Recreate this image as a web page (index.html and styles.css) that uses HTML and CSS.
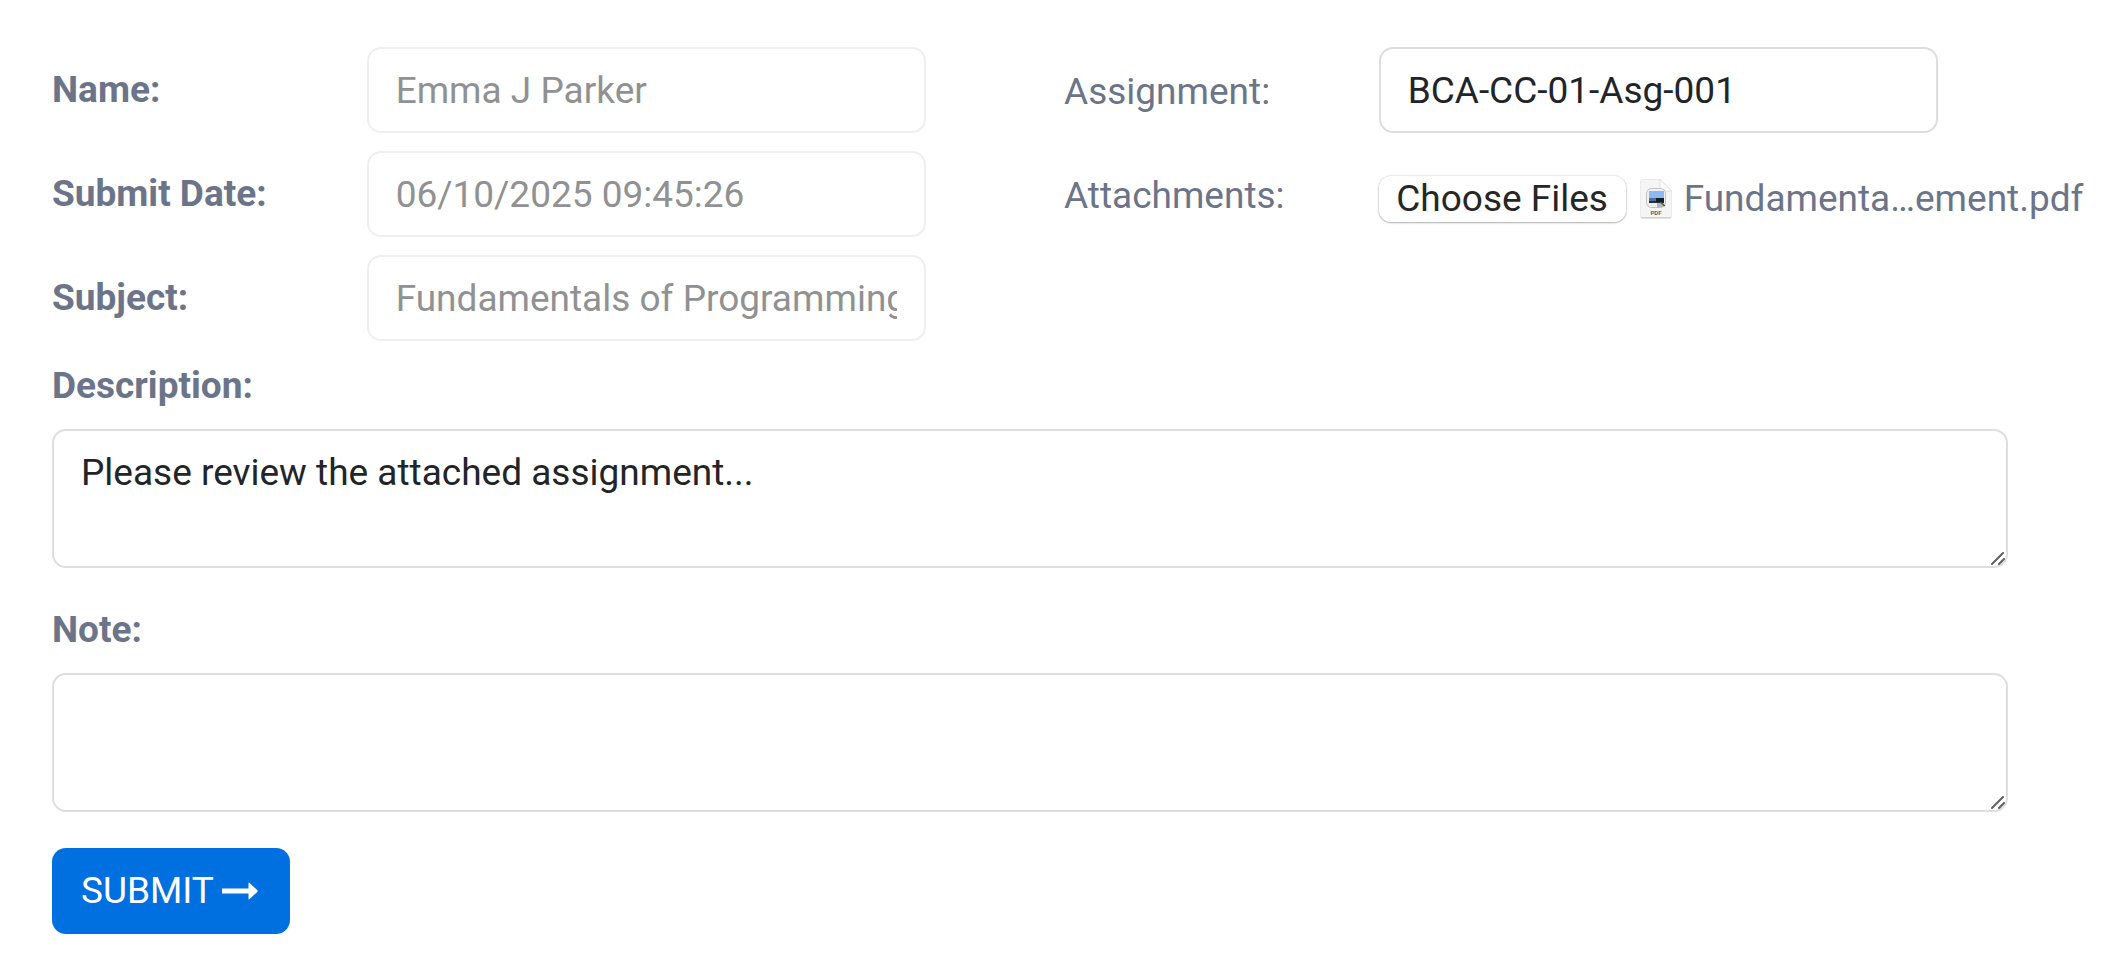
FILE: index.html
```html
<!DOCTYPE html>
<html lang="en">
<head>
  <meta charset="UTF-8">
  <meta name="viewport" content="width=device-width, initial-scale=1.0">
  <title>Submit Assignment</title>
  <link rel="stylesheet" href="styles.css">
</head>
<body>
  <form class="assignment-form">
    <div class="columns">
      <div class="column">
        <div class="field">
          <label for="name">Name:</label>
          <input type="text" id="name" class="form-control" value="Emma J Parker" disabled>
        </div>
        <div class="field">
          <label for="submitDate">Submit Date:</label>
          <input type="text" id="submitDate" class="form-control" value="06/10/2025 09:45:26" disabled>
        </div>
        <div class="field">
          <label for="subject">Subject:</label>
          <input type="text" id="subject" class="form-control" value="Fundamentals of Programming" disabled>
        </div>
      </div>

      <div class="column column-light">
        <div class="field">
          <label for="assignment">Assignment:</label>
          <input type="text" id="assignment" class="form-control" value="BCA-CC-01-Asg-001">
        </div>
        <div class="field">
          <label for="attachments">Attachments:</label>
          <div class="file-row">
            <input type="file" id="attachments" class="file-input" multiple>
            <svg class="file-icon" viewBox="0 0 32 40" aria-hidden="true">
              <path d="M2 .5h18L31.500 12v25.500a2 2 0 0 1-2 2H2.500a2 2 0 0 1-2-2V2A1.500 1.500 0 0 1 2 .5z" fill="#f5f5f5" stroke="#ebebeb"/>
              <path d="M1 38.800h30" stroke="#d2d2d2" stroke-width="1.400"/>
              <path d="M20 .5V10a2 2 0 0 0 2 2h9.500z" fill="#fff" stroke="#e0e0e0"/>
              <rect x="6.500" y="9.500" width="19" height="19" rx="5" fill="#f0f0f0" stroke="#c2c2c2"/>
              <rect x="9" y="12" width="15" height="11" fill="#8db9f2"/>
              <path d="M9 19h8v4H9z" fill="#4d6f9f"/>
              <path d="M9 22h15v2H9z" fill="#26313f"/>
              <path d="M16 19h8v4h-8z" fill="#171b20"/>
              <path d="M17 24h7v4h-7z" fill="#b5b5b5"/>
              <path d="M20 23l5 4" stroke="#555" stroke-width="1.500"/>
              <text x="16" y="36" text-anchor="middle" class="file-type">PDF</text>
            </svg>
            <span class="file-name">Fundamenta…ement.pdf</span>
          </div>
        </div>
      </div>
    </div>

    <div class="field-wide">
      <label for="description">Description:</label>
      <textarea id="description" class="form-control">Please review the attached assignment...</textarea>
    </div>
    <div class="field-wide">
      <label for="note">Note:</label>
      <textarea id="note" class="form-control"></textarea>
    </div>

    <button type="submit" class="btn-submit">
      SUBMIT
      <svg class="arrow" viewBox="0 0 36 18" aria-hidden="true">
        <path d="M0 6.500h26.500V1.500q0-1.500 1.200-.500l7.500 7q.8 1 0 2l-7.500 7q-1.200 1-1.200-.500v-5H0z" fill="currentColor"/>
      </svg>
    </button>
  </form>
</body>
</html>
```
FILE: styles.css
```css
* {
  box-sizing: border-box;
}
body {
  margin: 0;
  background: #fff;
  color: #6c7489;
  font-family: Roboto, "Liberation Sans", sans-serif;
  font-size: 37px;
  line-height: 58px;
}
.assignment-form {
  padding: 47px 32px 24px 52px;
}
.columns {
  display: grid;
  grid-template-columns: 1fr 1fr;
}
.column {
  display: flex;
  flex-direction: column;
  gap: 18px;
  min-width: 0;
  padding-right: 138px;
}
label {
  font-weight: 700;
}
.field {
  display: grid;
  grid-template-columns: 36% 64%;
  align-items: center;
  min-height: 86px;
}
.column-light label {
  padding-top: 4px;
  font-weight: 400;
}
.form-control {
  display: block;
  width: 100%;
  margin: 0;
  padding: 13px 27px;
  border: 2px solid #dedede;
  border-radius: 14px;
  background: #fff;
  color: #212529;
  font: inherit;
  outline: none;
}
input.form-control {
  height: 86px;
}
.form-control:disabled {
  border-color: #efefef;
  color: #909192;
}

/* file picker */
.file-row {
  display: flex;
  align-items: center;
  padding-top: 10px;
  white-space: nowrap;
}
.file-input {
  flex: none;
  width: 247px;
  height: 46px;
  border-radius: 12px;
  box-shadow: 0 0 2px rgba(0, 0, 0, 0.25), 0 1px 2px rgba(0, 0, 0, 0.25);
  font: inherit;
  line-height: 46px;
}
.file-input::file-selector-button {
  width: 100%;
  height: 46px;
  margin: 0;
  padding: 0;
  border: 0;
  border-radius: 12px;
  background: #fff;
  color: #262626;
  font: inherit;
  line-height: 46px;
}
.file-icon {
  flex: none;
  width: 32px;
  height: 40px;
  margin: 0 12px 0 14px;
}
.file-type {
  font-size: 6px;
  font-weight: 700;
  fill: #666;
}

.field-wide {
  margin: 16px 68px 33px 0;
}
.field-wide label {
  display: block;
  margin-bottom: 14px;
}
textarea.form-control {
  height: 139px;
  resize: vertical;
}
textarea::-webkit-resizer {
  background: url("data:image/svg+xml,%3Csvg xmlns='http://www.w3.org/2000/svg' viewBox='0 0 15 15'%3E%3Cpath d='M1 13L12 2M8 13l5-5' stroke='%23606060' stroke-width='2' stroke-linecap='round'/%3E%3C/svg%3E") no-repeat;
}

.btn-submit {
  display: flex;
  align-items: center;
  gap: 8px;
  height: 86px;
  margin-top: 36px;
  padding: 0 32px 0 29px;
  border: 0;
  border-radius: 14px;
  background: #006fe0;
  color: #fff;
  font: inherit;
  cursor: pointer;
}
.arrow {
  width: 36px;
  height: 18px;
}
```
